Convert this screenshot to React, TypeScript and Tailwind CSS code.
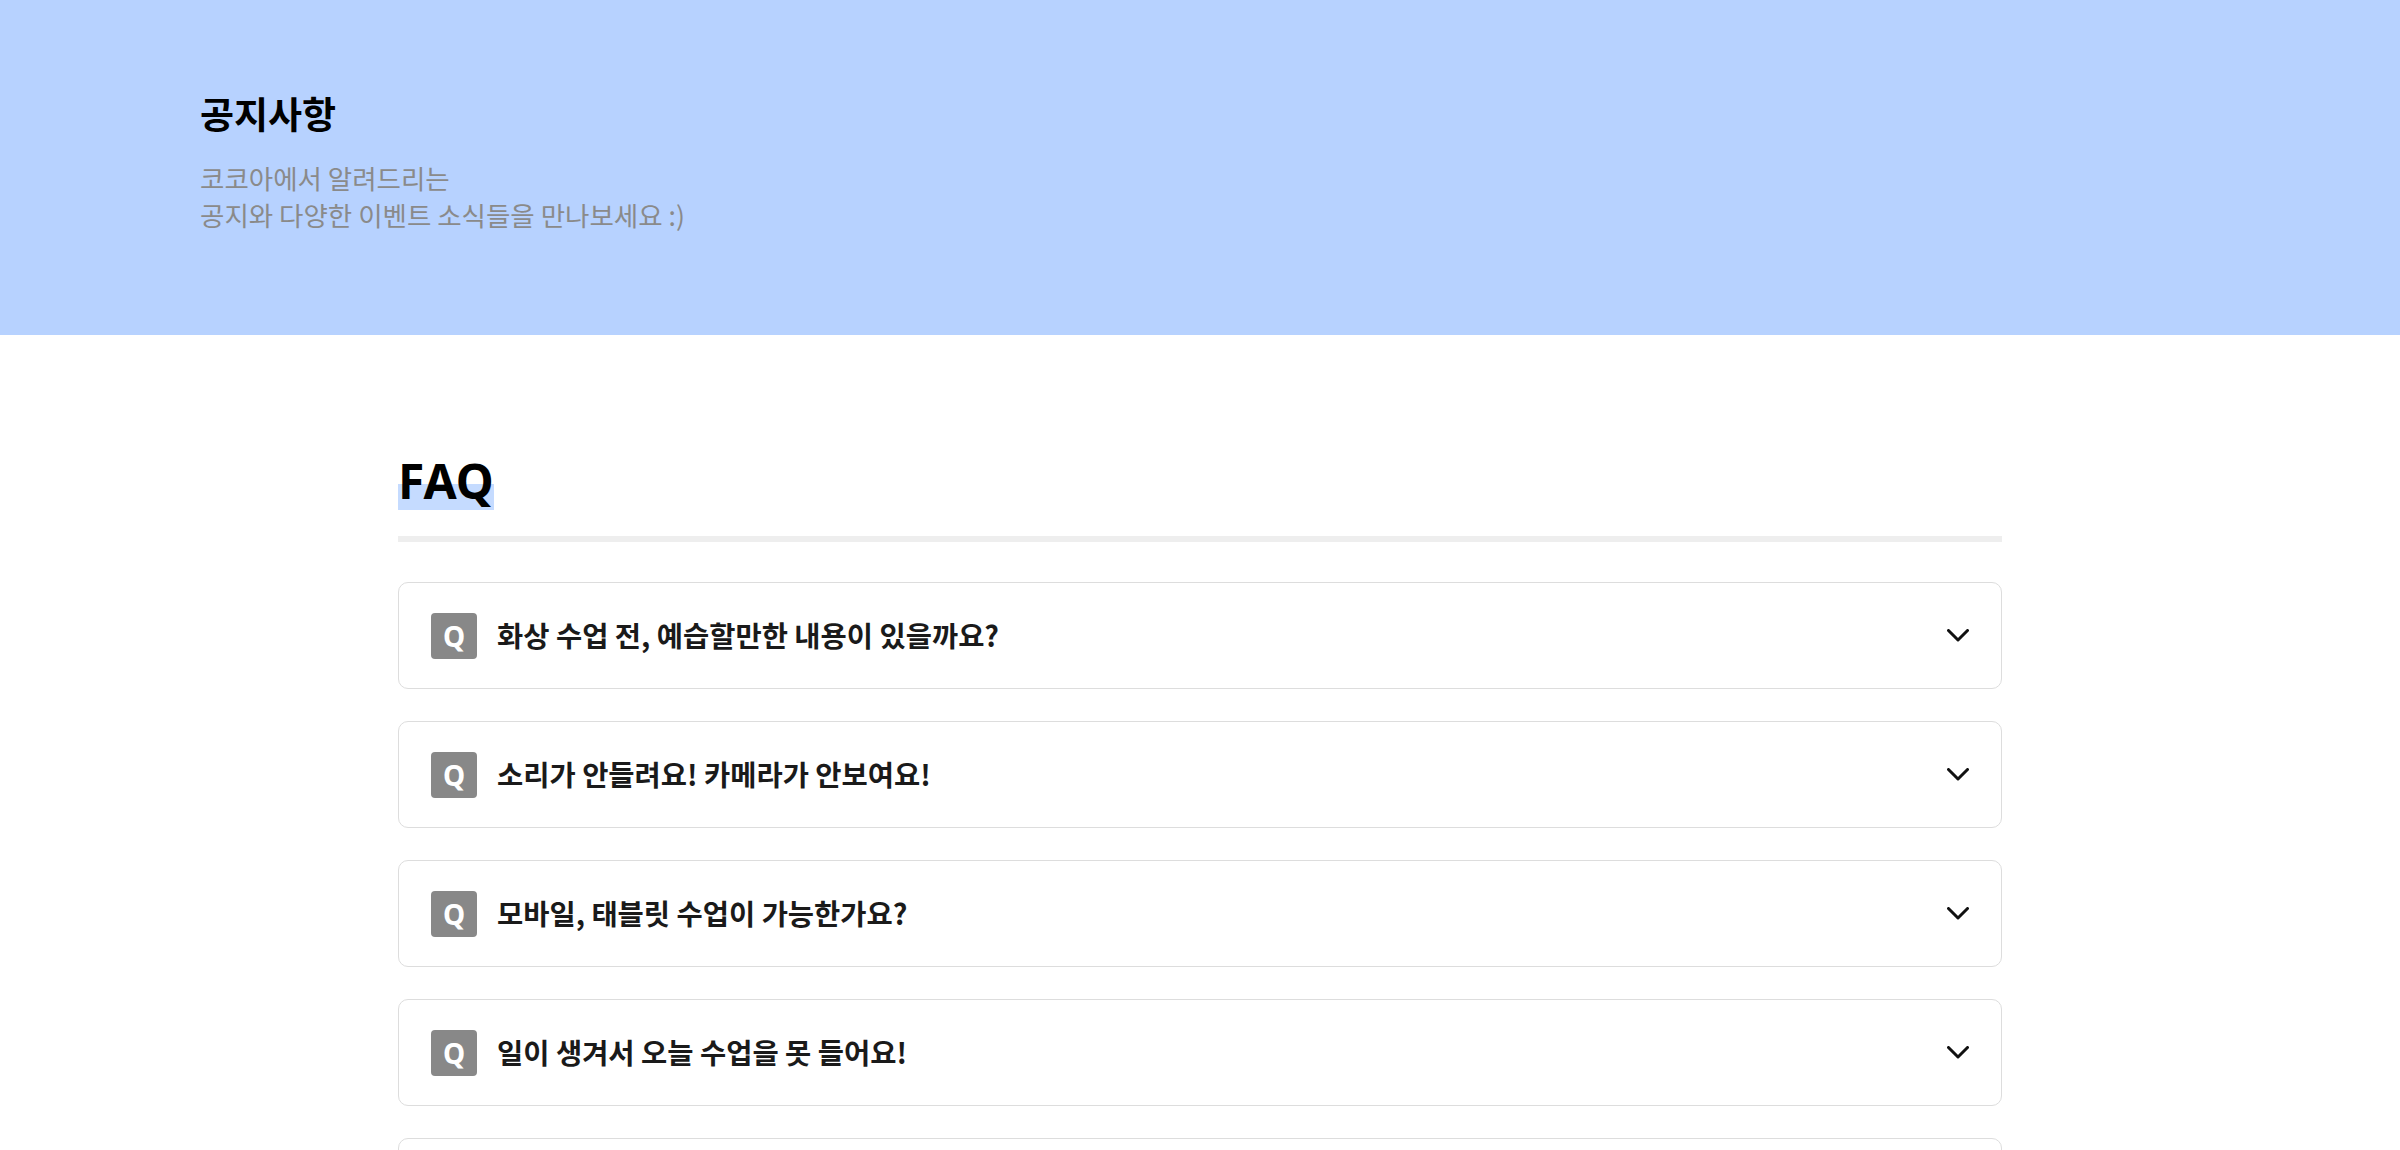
import React, { useState } from 'react';

const faqs = [
  { q: '화상 수업 전, 예습할만한 내용이 있을까요?', a: '수업 전 교재의 해당 단원을 미리 읽어보시면 좋아요.' },
  { q: '소리가 안들려요! 카메라가 안보여요!', a: '브라우저의 마이크/카메라 권한 설정을 확인해 주세요.' },
  { q: '모바일, 태블릿 수업이 가능한가요?', a: '네, 모바일과 태블릿에서도 수업이 가능합니다.' },
  { q: '일이 생겨서 오늘 수업을 못 들어요!', a: '수업 시작 전까지 고객센터로 연락해 주세요.' },
  { q: '수업 녹화본을 다시 볼 수 있나요?', a: '마이페이지에서 지난 수업을 다시 볼 수 있어요.' },
  { q: '환불 규정이 궁금해요!', a: '환불 규정은 이용약관을 참고해 주세요.' },
];

const Chevron = ({ open }: { open: boolean }) => (
  <svg
    width="22"
    height="13"
    viewBox="0 0 22 13"
    fill="none"
    className={open ? 'rotate-180' : ''}
  >
    <polyline points="1.5,1.5 11,11 20.5,1.5" stroke="#111" strokeWidth="3" strokeLinecap="round" strokeLinejoin="round" />
  </svg>
);

const FaqItem = ({ q, a }: { q: string; a: string }) => {
  const [open, setOpen] = useState(false);
  return (
    <div className="rounded-[10px] border border-[#dddddd] bg-white">
      <button
        type="button"
        onClick={() => setOpen(!open)}
        className="flex h-[105px] w-full items-center justify-between px-[32px] text-left"
      >
        <div className="flex items-center gap-[20px]">
          <span className="flex h-[46px] w-[46px] items-center justify-center rounded-[4px] bg-[#888888] text-[28px] font-bold text-white font-['Noto_Sans',sans-serif]">
            Q
          </span>
          <span className="text-[28.5px] font-bold text-[#1a1a1a]">{q}</span>
        </div>
        <Chevron open={open} />
      </button>
      {open && (
        <div className="border-t border-[#eeeeee] px-[32px] py-[28px] text-[24px] text-[#555555]">{a}</div>
      )}
    </div>
  );
};

export default function App() {
  return (
    <div className="min-h-screen bg-white font-['Noto_Sans_CJK_KR','Noto_Sans',sans-serif]">
      {/* Header */}
      <header className="h-[335px] bg-[#b7d2ff]">
        <div className="px-[200px] pt-[91px]">
          <h1 className="text-[37px] font-bold leading-[1.2] text-black">공지사항</h1>
          <p className="mt-[24px] text-[26.5px] leading-[37px] text-[#8a8a8a]">
            코코아에서 알려드리는
            <br />
            공지와 다양한 이벤트 소식들을 만나보세요 :)
          </p>
        </div>
      </header>

      {/* FAQ */}
      <section className="mx-auto w-[1604px] pt-[117px] pb-[80px]">
        <h2 className="block w-fit bg-[linear-gradient(transparent_55%,#c5dbff_55%)] font-['Noto_Sans',sans-serif] text-[48px] font-bold leading-[58px] text-black">
          FAQ
        </h2>
        <div className="mt-[26px] h-[6px] bg-[#eeeeee]" />
        <div className="mt-[40px] flex flex-col gap-[32px]">
          {faqs.map((f) => (
            <FaqItem key={f.q} q={f.q} a={f.a} />
          ))}
        </div>
      </section>
    </div>
  );
}
